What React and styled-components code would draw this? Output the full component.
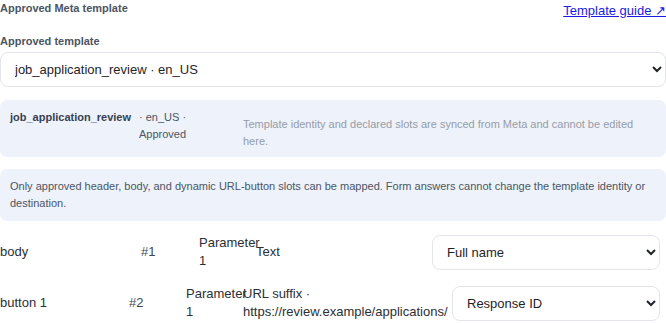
import styled, { createGlobalStyle } from "styled-components";

const GlobalStyle = createGlobalStyle`
  body {
    margin: 0;
    background: #ffffff;
    font-family: "Liberation Sans", Arial, sans-serif;
  }
`;

const slots = [
  {
    kind: "body",
    index: "#1",
    name: "Parameter 1",
    hint: "Text",
    value: "Full name",
    options: ["Full name", "Email", "Phone"],
    columns: "129px 46px 45px 164px 1fr",
  },
  {
    kind: "button 1",
    index: "#2",
    name: "Parameter 1",
    hint: "URL suffix · https://review.example/applications/",
    value: "Response ID",
    options: ["Response ID", "Full name"],
    columns: "117px 45px 45px 197px 1fr",
  },
];

const App = () => {
  return (
    <>
      <GlobalStyle />
      <Section>
        <Header>
          <Heading>Approved Meta template</Heading>
          <GuideLink href="#guide">Template guide ↗</GuideLink>
        </Header>

        <Field>
          <Label htmlFor="template">Approved template</Label>
          <Select id="template" defaultValue="job_application_review">
            <option value="job_application_review">
              job_application_review · en_US
            </option>
          </Select>
        </Field>

        <IdentityBox>
          <TemplateName>job_application_review</TemplateName>
          <TemplateMeta>· en_US · Approved</TemplateMeta>
          <SyncNote>
            Template identity and declared slots are synced from Meta and
            cannot be edited here.
          </SyncNote>
        </IdentityBox>

        <NoticeBox>
          Only approved header, body, and dynamic URL-button slots can be
          mapped. Form answers cannot change the template identity or
          destination.
        </NoticeBox>

        <SlotList>
          {slots.map((slot) => (
            <SlotRow key={slot.index} $columns={slot.columns}>
              <SlotKind>{slot.kind}</SlotKind>
              <SlotIndex>{slot.index}</SlotIndex>
              <SlotName>{slot.name}</SlotName>
              <SlotHint>{slot.hint}</SlotHint>
              <Select defaultValue={slot.value}>
                {slot.options.map((o) => (
                  <option key={o} value={o}>
                    {o}
                  </option>
                ))}
              </Select>
            </SlotRow>
          ))}
        </SlotList>
      </Section>
    </>
  );
};

export default App;

const Section = styled.section`
  display: flex;
  flex-direction: column;
  width: 666px;
`;

const Header = styled.div`
  display: flex;
  justify-content: space-between;
  align-items: flex-start;
  height: 20px;
`;

const Heading = styled.h3`
  margin: 2px 0 0;
  font-size: 11px;
  font-weight: 700;
  color: #4b5563;
`;

const GuideLink = styled.a`
  margin-top: 3px;
  font-size: 13px;
  color: #1a1ae6;
  text-decoration: underline;
`;

const Field = styled.div`
  display: flex;
  flex-direction: column;
  gap: 5px;
  margin-top: 15px;
`;

const Label = styled.label`
  font-size: 11px;
  font-weight: 700;
  color: #4b5563;
`;

const Select = styled.select`
  box-sizing: border-box;
  width: 100%;
  height: 35px;
  padding: 0 6px 0 10px;
  border: 1px solid #e2e5ea;
  border-radius: 8px;
  background: #ffffff;
  font-family: inherit;
  font-size: 13px;
  color: #1f2328;
`;

const InfoBox = styled.div`
  box-sizing: border-box;
  padding: 9px 10px;
  border-radius: 7px;
  background: #eef2fb;
  font-size: 11px;
  line-height: 17px;
`;

const IdentityBox = styled(InfoBox)`
  display: grid;
  grid-template-columns: 121px 96px 1fr;
  column-gap: 8px;
  padding-bottom: 7px;
  margin-top: 13px;
`;

const TemplateName = styled.strong`
  color: #374151;
`;

const TemplateMeta = styled.span`
  max-width: 52px;
  color: #4b5563;
`;

const SyncNote = styled.span`
  padding: 7px 8px 0 0;
  color: #969ca6;
`;

const NoticeBox = styled(InfoBox)`
  margin-top: 12px;
  color: #4b5563;
`;

const SlotList = styled.div`
  display: flex;
  flex-direction: column;
  gap: 15px;
  margin-top: 13px;
`;

const SlotRow = styled.div`
  display: grid;
  grid-template-columns: ${(p) => p.$columns};
  column-gap: 12px;
  align-items: center;
  padding-right: 6px;
  font-size: 13px;
  line-height: 18px;
  color: #2b2f36;
`;

const SlotKind = styled.span``;

const SlotIndex = styled.span`
  color: #3f4650;
`;

const SlotName = styled.span`
  color: #2b2f36;
`;

const SlotHint = styled.span`
  color: #2b2f36;
`;
